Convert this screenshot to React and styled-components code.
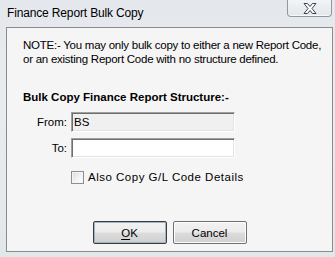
import React from "react";
import styled, { createGlobalStyle } from "styled-components";

const Global = createGlobalStyle`
  html, body { margin: 0; padding: 0; }
  body {
    width: 335px;
    height: 257px;
    overflow: hidden;
    font-family: "Liberation Sans", Arial, sans-serif;
    font-size: 11.5px;
    color: #000;
  }
`;

const Window = styled.div`
  width: 335px;
  height: 257px;
  box-sizing: border-box;
  display: flex;
  flex-direction: column;
  background: linear-gradient(180deg, #e4e8ec 0%, #e9ecef 40%, #e2e7ea 100%);
  padding: 0 2px 5px 6px;
`;

const TitleBar = styled.div`
  height: 27px;
  flex: none;
  display: flex;
  align-items: flex-start;
  justify-content: space-between;
`;

const Title = styled.div`
  margin: 6px 0 0 1px;
  font-size: 12px;
  line-height: 14px;
  letter-spacing: -0.15px;
  white-space: nowrap;
  color: #000;
`;

const CloseButton = styled.div`
  width: 45px;
  height: 17px;
  margin-right: 1px;
  box-sizing: border-box;
  border: 1px solid #8f99a4;
  border-top: none;
  border-radius: 0 0 4px 4px;
  background: linear-gradient(180deg, #f2f4f6 0%, #e3e7eb 100%);
  box-shadow: inset 0 -1px 0 #f8f9fa;
  display: flex;
  align-items: center;
  justify-content: center;
`;

const Client = styled.div`
  flex: 1;
  min-height: 0;
  box-sizing: border-box;
  border: 1px solid #8a8c8e;
  background: #f5f5f5;
  padding: 10px 16px 0 16px;
  display: flex;
  flex-direction: column;
  white-space: nowrap;
`;

const Note = styled.p`
  margin: 0;
  line-height: 14px;
  letter-spacing: -0.25px;
`;

const Heading = styled.div`
  margin-top: 24px;
  font-size: 11.5px;
  font-weight: bold;
  line-height: 14px;
`;

const Form = styled.div`
  margin-top: 8px;
  display: grid;
  grid-template-columns: 44px 164px;
  column-gap: 4px;
  row-gap: 6px;
  align-items: center;
`;

const Label = styled.label`
  text-align: right;
  line-height: 14px;
`;

const TextBox = styled.input`
  box-sizing: border-box;
  width: 164px;
  height: 20px;
  margin: 0;
  padding: 0 2px;
  font-family: "Liberation Sans", Arial, sans-serif;
  font-size: 11.5px;
  color: #000;
  outline: none;
  border: 1px solid;
  border-color: #a0a0a0 #ffffff #ffffff #a0a0a0;
  box-shadow: inset 1px 1px 0 #6e6e6e, inset -1px -1px 0 #e3e3e3;
  background: ${(p) => (p.readOnly ? "#f0f0f0" : "#ffffff")};
`;

const CheckRow = styled.label`
  grid-column: 2;
  margin-top: 6px;
  display: flex;
  align-items: center;
  gap: 4px;
  line-height: 14px;
  letter-spacing: 0.5px;
`;

const CheckBox = styled.span`
  flex: none;
  width: 13px;
  height: 13px;
  box-sizing: border-box;
  border: 1px solid #8f8f8f;
  background: linear-gradient(135deg, #dcdcdc 0%, #f4f4f4 60%, #ffffff 100%);
  box-shadow: inset 0 0 0 1px #f4f4f4;
`;

const Buttons = styled.div`
  margin-top: 37px;
  display: flex;
  justify-content: center;
  gap: 6px;
`;

const Button = styled.button`
  width: 74px;
  height: 23px;
  box-sizing: border-box;
  margin: 0;
  padding: 0;
  font-family: "Liberation Sans", Arial, sans-serif;
  font-size: 11.5px;
  color: #000;
  border: 1px solid ${(p) => (p.$default ? "#3c3c3c" : "#707070")};
  border-radius: 2px;
  background: linear-gradient(180deg, #f2f2f2 0%, #ebebeb 49%, #dddddd 51%, #cfcfcf 100%);
  box-shadow: inset 0 0 0 1px ${(p) => (p.$default ? "#9fb4c8" : "#fcfcfc")};
  & u { text-decoration: underline; text-underline-offset: 2px; }
`;

export default function App() {
  return (
    <>
      <Global />
      <Window>
        <TitleBar>
          <Title>Finance Report Bulk Copy</Title>
          <CloseButton>
            <svg width="14" height="11" viewBox="0 0 14 11">
              <path
                d="M1 0.5 H4.5 L7 3.5 L9.5 0.5 H13 L9 5.5 L13 10.5 H9.5 L7 7.5 L4.5 10.5 H1 L5 5.5 Z"
                fill="#ffffff"
                stroke="#3a4450"
                strokeWidth="1"
                strokeLinejoin="round"
              />
            </svg>
          </CloseButton>
        </TitleBar>
        <Client>
          <Note>
            NOTE:- You may only bulk copy to either a new Report Code,
            <br />
            or an existing Report Code with no structure defined.
          </Note>
          <Heading>Bulk Copy Finance Report Structure:-</Heading>
          <Form>
            <Label>From:</Label>
            <TextBox readOnly value="BS" />
            <Label>To:</Label>
            <TextBox defaultValue="" />
            <CheckRow>
              <CheckBox />
              Also Copy G/L Code Details
            </CheckRow>
          </Form>
          <Buttons>
            <Button $default>
              <u>O</u>K
            </Button>
            <Button>Cancel</Button>
          </Buttons>
        </Client>
      </Window>
    </>
  );
}
